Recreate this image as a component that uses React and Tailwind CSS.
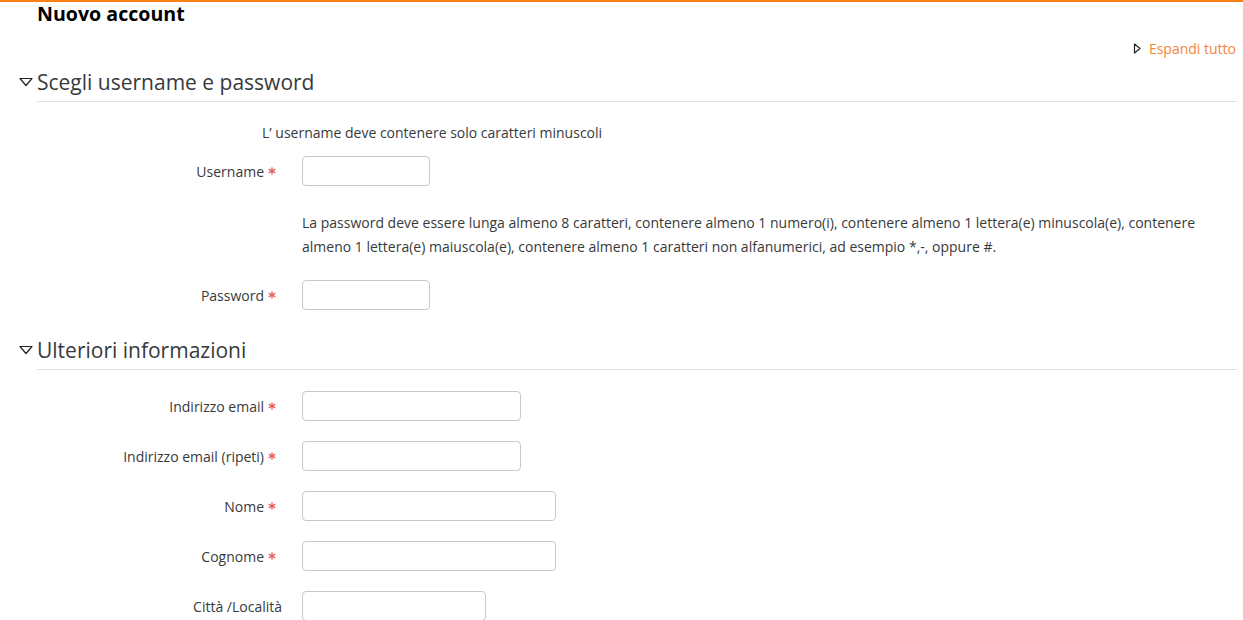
import { useState } from "react";

function Asterisk() {
  return (
    <svg width="8" height="8" viewBox="0 0 8 8" className="ml-[4px] mr-[6px] shrink-0">
      <g stroke="#e55c5c" strokeWidth="1.3" strokeLinecap="round">
        <line x1="4" y1="0.8" x2="4" y2="7.2" />
        <line x1="1.2" y1="2.4" x2="6.8" y2="5.6" />
        <line x1="1.2" y1="5.6" x2="6.8" y2="2.4" />
      </g>
    </svg>
  );
}

function Field({ label, required, width, value, onChange }) {
  return (
    <div className="flex items-center h-[30px] mb-[20px]">
      <div className="w-[302px] pr-[20px] flex justify-end items-center text-[14px] text-[#373a3c]">
        <span>{label}</span>
        {required && <Asterisk />}
      </div>
      <input
        type="text"
        value={value}
        onChange={(e) => onChange(e.target.value)}
        className={`${width} h-[30px] border border-[#c8c8c8] rounded-[4px] px-2 text-[14px] outline-none`}
      />
    </div>
  );
}

function Legend({ title }) {
  return (
    <div className="flex items-start pl-[19px]">
      <div className="w-[18px] h-[32px] flex items-center">
        <svg width="14" height="10" viewBox="0 0 14 10">
          <path d="M1 1.5 L13 1.5 L7 8.5 Z" fill="none" stroke="#222" strokeWidth="1.2" strokeLinejoin="round" />
        </svg>
      </div>
      <div className="flex-1 mr-[6px] border-b border-[#dee2e6] text-[21px] leading-[32px] pb-[3px] text-[#373a3c]">
        {title}
      </div>
    </div>
  );
}

export default function App() {
  const [form, setForm] = useState({});
  const set = (k) => (v) => setForm({ ...form, [k]: v });

  return (
    <div className="min-h-[620px] bg-white border-t-2 border-[#f98012] font-['Open_Sans',sans-serif] text-[14px] text-[#373a3c]">
      <h2 className="pl-[37px] text-[19.6px] leading-[24px] font-bold text-black">Nuovo account</h2>

      <div className="flex justify-end items-center pr-[7px] mt-[10px] h-[24px]">
        <svg width="8" height="11" viewBox="0 0 8 11" className="mr-[8px]">
          <path d="M1.5 1 L7 5.5 L1.5 10 Z" fill="none" stroke="#222" strokeWidth="1.2" strokeLinejoin="round" />
        </svg>
        <a className="text-[#f3853c] text-[14px]">Espandi tutto</a>
      </div>

      <div className="mt-[6px]">
        <Legend title="Scegli username e password" />
      </div>

      <div className="pl-[262px] mt-[21px] mb-[13px] leading-[20px]">
        L’ username deve contenere solo caratteri minuscoli
      </div>
      <Field label="Username" required width="w-[128px]" value={form.u || ""} onChange={set("u")} />

      <div className="pl-[302px] pr-[46px] mt-[25px] mb-[21px] leading-[24px]">
        La password deve essere lunga almeno 8 caratteri, contenere almeno 1 numero(i), contenere almeno 1
        lettera(e) minuscola(e), contenere almeno 1 lettera(e) maiuscola(e), contenere almeno 1 caratteri non
        alfanumerici, ad esempio *,-, oppure #.
      </div>
      <Field label="Password" required width="w-[128px]" value={form.p || ""} onChange={set("p")} />

      <div className="mt-[24px]">
        <Legend title="Ulteriori informazioni" />
      </div>

      <div className="mt-[21px]">
        <Field label="Indirizzo email" required width="w-[219px]" value={form.e || ""} onChange={set("e")} />
        <Field label="Indirizzo email (ripeti)" required width="w-[219px]" value={form.e2 || ""} onChange={set("e2")} />
        <Field label="Nome" required width="w-[254px]" value={form.n || ""} onChange={set("n")} />
        <Field label="Cognome" required width="w-[254px]" value={form.c || ""} onChange={set("c")} />
        <Field label="Città /Località" width="w-[184px]" value={form.l || ""} onChange={set("l")} />
      </div>
    </div>
  );
}
